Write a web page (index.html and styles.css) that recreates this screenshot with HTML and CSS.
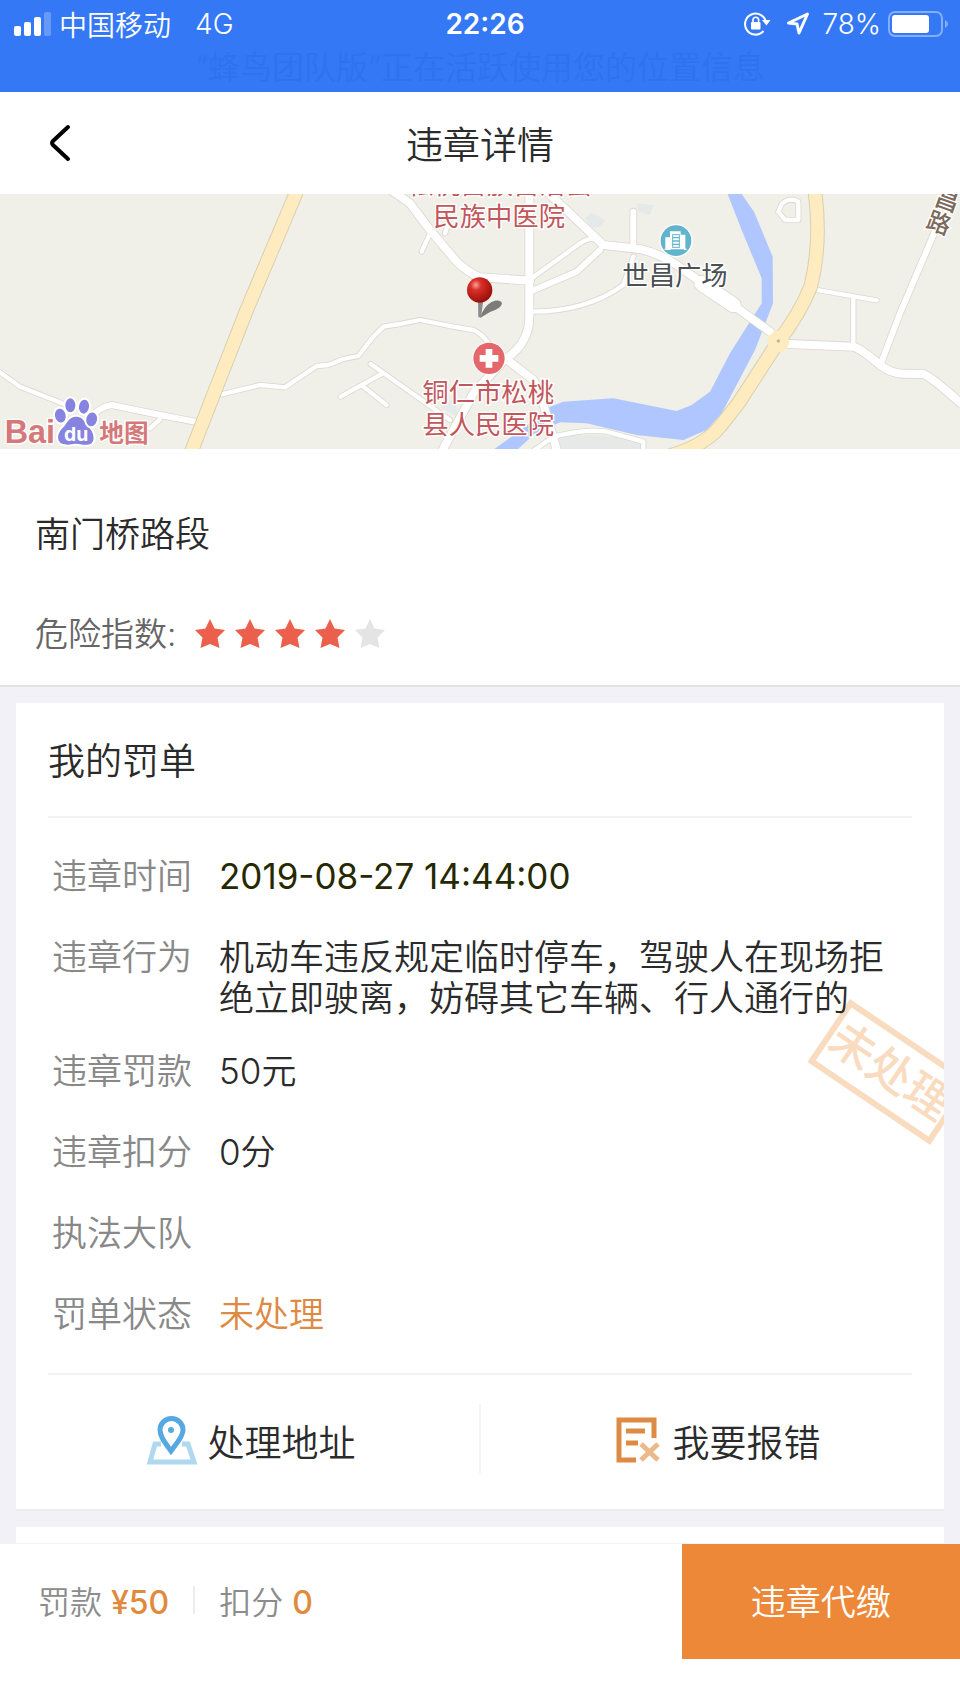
FILE: index.html
```html
<!DOCTYPE html>
<html lang="zh-CN">
<head>
    <meta charset="UTF-8">
    <meta name="viewport" content="width=device-width, initial-scale=1.0">
    <title>违章详情</title>
    <link rel="stylesheet" href="styles.css">
</head>
<body>

    <div class="status-bar">
        <div class="status-row">
            <div class="status-left">
                <svg class="signal" viewBox="0 0 38 24" fill="#fff">
                    <rect x="0" y="14" width="7" height="10" rx="2"/>
                    <rect x="10" y="10" width="7" height="14" rx="2"/>
                    <rect x="20" y="5" width="7" height="19" rx="2"/>
                    <rect x="30" y="0" width="7" height="24" rx="2" opacity=".25"/>
                </svg>
                <span class="carrier">中国移动</span>
                <span>4G</span>
            </div>
            <div class="clock">22:26</div>
            <div class="status-right">
                <svg class="lock" viewBox="0 0 28 26" fill="none" stroke="#fff" stroke-width="2">
                    <path d="M22 12 A10.500 10.500 0 1 0 19.500 20"/>
                    <path d="M18 9 L26.500 9 L22.500 14.500 Z" fill="#fff" stroke="none"/>
                    <rect x="7" y="11" width="9.500" height="7.500" rx="1" fill="#fff" stroke="none"/>
                    <path d="M9 11 V9 a2.800 2.800 0 0 1 5.600 0 V11" stroke-width="1.600"/>
                </svg>
                <svg class="arrow" viewBox="0 0 24 24" fill="none" stroke="#fff" stroke-width="3" stroke-linejoin="round">
                    <path d="M21.500 2 L2.500 11 L11 12 L13 21 Z"/>
                </svg>
                <span class="percent">78%</span>
                <svg class="battery" viewBox="0 0 60 26">
                    <rect x="1" y="1" width="53" height="24" rx="6" fill="none" stroke="#fff" stroke-width="2" opacity=".4"/>
                    <rect x="4" y="4" width="37" height="18" rx="3" fill="#fff"/>
                    <path d="M57 9 q3 1.500 3 4 q0 2.500 -3 4 Z" fill="#fff" opacity=".4"/>
                </svg>
            </div>
        </div>
        <div class="location-tip">“蜂鸟团队版”正在活跃使用您的位置信息</div>
    </div>

    <header class="nav">
        <a class="back" href="#" aria-label="返回">
            <svg viewBox="0 0 22 40" fill="none" stroke="#000" stroke-width="4" stroke-linecap="round" stroke-linejoin="round">
                <path d="M19 4 L4 18 Q2 20 4 22 L19 36"/>
            </svg>
        </a>
        <h1>违章详情</h1>
    </header>

    <svg class="map" viewBox="0 12 2880 765" preserveAspectRatio="xMidYMid slice">
        <defs>
            <radialGradient id="pin" cx=".35" cy=".3" r=".7">
                <stop offset="0" stop-color="#f5a49c"/>
                <stop offset=".3" stop-color="#d93027"/>
                <stop offset="1" stop-color="#9c0f0c"/>
            </radialGradient>
            <!-- white roads, drawn twice: casing first, then fill -->
            <g id="roads" fill="none" stroke-linejoin="round" stroke-linecap="round">
                <path class="w3" d="M1180 5 L1230 40 L1290 120 L1370 215 Q1400 245 1440 262 L1590 272"/>
                <path class="w1" d="M1290 130 L1265 185 M1335 130 L1345 100"/>
                <path class="w1" d="M665 613 L780 585 L855 592 L950 528 L985 525 L1030 507 L1075 498 L1120 440 L1150 410 L1200 402 L1260 390 L1360 410 L1420 420 Q1445 430 1470 465"/>
                <path class="w3" d="M1588 5 V380 Q1588 460 1515 508 L1420 610 L1325 785"/>
                <path class="w3" d="M1525 512 L1600 570 Q1620 600 1635 660 L1672 785"/>
                <path class="w3" d="M1640 5 L1720 80 L1810 165 L1900 175 Q1960 180 2030 225 L2150 310 L2310 425"/>
                <path class="w5" d="M2105 280 L2200 345"/>
                <path class="w1" d="M1595 265 L1740 160 Q1770 140 1790 150"/>
                <path class="w2" d="M1595 303 L1730 245 L1800 180"/>
                <path class="w1" d="M1595 365 Q1760 365 1870 285 L1900 200"/>
                <path class="w2" d="M1900 65 V170"/>
                <path class="w1" d="M2345 42 Q2370 20 2395 35 L2395 90 L2355 90 L2335 65 Z"/>
                <path class="w1" d="M2445 299 L2630 331 M2560 322 V465"/>
                <path class="w3" d="M2350 461 L2560 470 Q2585 478 2640 525 Q2680 555 2720 551 L2770 552 Q2800 565 2880 638"/>
                <path class="w2" d="M2645 515 L2700 370 L2815 100"/>
                <path class="w1" d="M-10 540 L60 590 L200 645 M480 688 L450 715"/>
                <path class="w2" d="M270 685 Q300 650 335 645 L480 675 L585 695"/>
                <path class="w1" d="M1112 522 L1350 690 M1022 620 L1145 552 M1090 590 L1160 645"/>
                <path class="w1" d="M1590 790 L1660 740 Q1760 715 1820 725 L1930 755 V790"/>
            </g>
        </defs>

        <rect y="0" width="2880" height="790" fill="#f0efe8"/>
        <path d="M1680 790 L1660 745 Q1770 720 1925 757 V790 Z" fill="#e6e9e7"/>
        <path d="M1755 85 L1775 68 L1815 90 L1800 110 L1775 115 Z M1910 40 L1960 45 L1950 75 L1915 65 Z M1320 650 L1370 620 V680 Z" fill="#e4e9ea"/>
        <path d="M2180 5 L2225 12 L2262 65 L2318 200 L2319 340 L2265 480 L2165 670 L2120 720 L2050 750 L1910 735 L1760 700 L1680 697 L1600 735 L1540 790 L1465 790 L1590 700 L1640 655 L1690 635 L1840 625 L2030 663 L2075 645 L2130 605 L2190 490 L2285 340 L2285 265 L2225 120 Z" fill="#afc6ff"/>

        <use href="#roads" class="casing"/>
        <use href="#roads" class="fill"/>

        <g fill="none" stroke-linejoin="round">
            <path d="M890 5 L740 360 L650 590 L572 790 M2445 5 Q2465 160 2432 290 Q2400 370 2335 455 L2215 640 L2160 710 Q2110 770 2000 800" stroke="#d9d0b0" stroke-width="44"/>
            <circle cx="2335" cy="455" r="32" fill="#feebbf"/>
            <path d="M890 5 L740 360 L650 590 L572 790 M2445 5 Q2465 160 2432 290 Q2400 370 2335 455 L2215 640 L2160 710 Q2110 770 2000 800" stroke="#feebbf" stroke-width="38"/>
        </g>
        <circle cx="2335" cy="453" r="5" fill="#c9b37d"/>

        <g class="label hospital">
            <text x="1223" y="11">松桃苗族自治县</text>
            <text x="1300" y="108">民族中医院</text>
            <text x="1267" y="636">铜仁市松桃</text>
            <text x="1267" y="733">县人民医院</text>
        </g>
        <text class="label place" x="1867" y="284">世昌广场</text>
        <text class="label street" x="2774" y="111" transform="rotate(20 2774 111)">路</text>
        <text class="label street" x="2800" y="43" transform="rotate(20 2800 43)">昌</text>

        <g>
            <circle cx="2028" cy="152" r="50" fill="#fff"/>
            <circle cx="2028" cy="152" r="46" fill="#62b4cd"/>
            <path d="M1998 178 V144 H2012 V126 H2040 V136 H2054 V178 H2060 M1994 178 H2012" fill="#fff" stroke="#fff" stroke-width="4"/>
            <rect x="2018" y="134" width="20" height="38" fill="#fff" stroke="#62b4cd" stroke-width="3"/>
            <path d="M2018 143 H2038 M2018 153 H2038 M2018 163 H2038" stroke="#62b4cd" stroke-width="4"/>
        </g>
        <g>
            <circle cx="1467" cy="505" r="50" fill="#fff"/>
            <circle cx="1467" cy="505" r="47" fill="#e4686b"/>
            <path d="M1467 477 V533 M1439 505 H1495" stroke="#fff" stroke-width="20"/>
        </g>
        <g>
            <path d="M1440 384 Q1450 350 1475 336 Q1500 326 1506 340 Q1504 356 1470 366 Z" fill="#555" opacity=".75"/>
            <path d="M1434 330 L1435 382 H1443 L1450 330 Z" fill="#8b8b8b"/>
            <circle cx="1439" cy="300" r="38" fill="url(#pin)"/>
        </g>

        <g class="logo">
            <text class="logo-bai" x="14" y="759">Bai</text>
            <g fill="#8783e0" stroke="#fff" stroke-width="12" paint-order="stroke">
                <path d="M228 680 C250 680 256 700 268 714 C284 730 288 764 262 764 C246 766 240 761 228 761 C216 761 208 766 194 763 C168 760 170 730 188 714 C200 702 206 680 228 680 Z"/>
                <ellipse cx="181" cy="677" rx="16" ry="21" transform="rotate(-12 181 677)"/>
                <ellipse cx="211" cy="646" rx="15" ry="21"/>
                <ellipse cx="252" cy="650" rx="15" ry="21" transform="rotate(8 252 650)"/>
                <ellipse cx="275" cy="688" rx="16" ry="21" transform="rotate(12 275 688)"/>
            </g>
            <text class="logo-du" x="192" y="752">du</text>
            <text class="logo-map" x="298" y="755">地图</text>
        </g>
    </svg>

    <section class="place-info">
        <h2>南门桥路段</h2>
        <div class="danger">
            <span>危险指数:</span>
            <div class="stars" role="img" aria-label="4/5">
                <svg class="star on" viewBox="0 0 32 32"><path d="M16 1 L20.500 10.500 L31 12 L23.500 19.500 L25.500 30 L16 26 L6.500 30 L8.500 19.500 L1 12 L11.500 10.500 Z"/></svg>
                <svg class="star on" viewBox="0 0 32 32"><path d="M16 1 L20.500 10.500 L31 12 L23.500 19.500 L25.500 30 L16 26 L6.500 30 L8.500 19.500 L1 12 L11.500 10.500 Z"/></svg>
                <svg class="star on" viewBox="0 0 32 32"><path d="M16 1 L20.500 10.500 L31 12 L23.500 19.500 L25.500 30 L16 26 L6.500 30 L8.500 19.500 L1 12 L11.500 10.500 Z"/></svg>
                <svg class="star on" viewBox="0 0 32 32"><path d="M16 1 L20.500 10.500 L31 12 L23.500 19.500 L25.500 30 L16 26 L6.500 30 L8.500 19.500 L1 12 L11.500 10.500 Z"/></svg>
                <svg class="star" viewBox="0 0 32 32"><path d="M16 1 L20.500 10.500 L31 12 L23.500 19.500 L25.500 30 L16 26 L6.500 30 L8.500 19.500 L1 12 L11.500 10.500 Z"/></svg>
            </div>
        </div>
    </section>

    <main class="content">
        <section class="card">
            <h2 class="card-title">我的罚单</h2>
            <div class="stamp">未处理</div>
            <dl class="ticket">
                <div class="row"><dt>违章时间</dt><dd class="time">2019-08-27 14:44:00</dd></div>
                <div class="row"><dt>违章行为</dt><dd>机动车违反规定临时停车，驾驶人在现场拒绝立即驶离，妨碍其它车辆、行人通行的</dd></div>
                <div class="row"><dt>违章罚款</dt><dd>50元</dd></div>
                <div class="row"><dt>违章扣分</dt><dd>0分</dd></div>
                <div class="row"><dt>执法大队</dt><dd></dd></div>
                <div class="row"><dt>罚单状态</dt><dd class="pending">未处理</dd></div>
            </dl>
            <div class="actions">
                <button type="button" class="action">
                    <svg viewBox="0 0 60 60" fill="none">
                        <path d="M21 35 H15 L10 53 H54 L48 35 H42" stroke="#b0d9f0" stroke-width="5"/>
                        <path d="M31 42 C26 35 20 28 20 21 A11.500 11.500 0 0 1 43 21 C43 28 36 35 31 42 Z" stroke="#55a8e2" stroke-width="5"/>
                        <circle cx="31" cy="21" r="3" fill="#55a8e2"/>
                    </svg>
                    <span>处理地址</span>
                </button>
                <button type="button" class="action">
                    <svg viewBox="0 0 60 60" fill="none" stroke="#dd8a45" stroke-width="5">
                        <path d="M31 51 H14 V11 H49 V29"/>
                        <path d="M21 22 H40 M21 34 H33"/>
                        <path d="M36 35 L53 51 M53 35 L36 51" stroke="#ebb88a"/>
                    </svg>
                    <span>我要报错</span>
                </button>
            </div>
        </section>
        <section class="card next"></section>
    </main>

    <footer class="pay-bar">
        <div class="summary">
            <span>罚款 <b>¥50</b></span>
            <span class="sep"></span>
            <span>扣分 <b>0</b></span>
        </div>
        <button type="button" class="pay">违章代缴</button>
    </footer>

</body>
</html>
```
FILE: styles.css
```css
* { box-sizing: border-box; }
body {
    margin: 0;
    min-height: 100vh;
    display: flex;
    flex-direction: column;
    background-color: #fff;
    color: #2b2b2b;
    font-family: Inter, "Noto Sans CJK SC", sans-serif;
    font-weight: 350;
}
h1, h2, dl, dd { margin: 0; font-weight: inherit; }
button { font: inherit; color: inherit; border: none; cursor: pointer; }
svg { display: block; }

/* status bar */
.status-bar { background-color: #3478f6; color: #fff; height: 92px; font-size: 28px; }
.status-row {
    display: grid;
    grid-template-columns: 1fr auto 1fr;
    align-items: center;
    height: 48px;
    padding: 0 12px 0 14px;
}
.status-left { display: flex; align-items: center; }
.signal { width: 38px; height: 24px; margin-right: 7px; }
.carrier { margin-right: 24px; }
.clock { font-weight: 600; padding-left: 8px; }
.status-right { display: flex; align-items: center; justify-content: flex-end; }
.lock { width: 28px; height: 26px; margin-right: 14px; }
.arrow { width: 24px; height: 24px; margin-right: 12px; }
.percent { margin-right: 7px; }
.battery { width: 60px; height: 26px; }
.location-tip { text-align: center; font-size: 32px; line-height: 40px; color: #3072ee; }

/* title */
.nav { display: grid; grid-template-columns: 80px 1fr 80px; align-items: center; height: 102px; }
.nav h1 { text-align: center; font-size: 37px; }
.back { justify-self: end; padding: 0 9px; }
.back svg { width: 22px; height: 40px; }

/* map */
.map { width: 100%; height: auto; }
.casing { stroke: #dad9d2; --edge: 5px; }
.fill { stroke: #fff; --edge: 0px; }
.w1 { stroke-width: calc(13px + var(--edge)); }
.w2 { stroke-width: calc(18px + var(--edge)); }
.w3 { stroke-width: calc(24px + var(--edge)); }
.w5 { stroke-width: calc(44px + var(--edge)); }
.label { font-size: 79px; font-weight: 400; stroke: #fff; stroke-width: 8px; paint-order: stroke; }
.hospital { fill: #c2565b; }
.place { fill: #4a5052; }
.street { fill: #7b6a5c; font-size: 72px; font-weight: 500; }
.logo { font-weight: 700; fill: #d4787a; stroke: #fff; stroke-width: 8px; paint-order: stroke; }
.logo-bai { font-family: "Liberation Sans", sans-serif; font-size: 97px; }
.logo-du { font-size: 58px; fill: #fff; stroke: none; }
.logo-map { font-size: 74px; }

/* place */
.place-info { padding: 60px 35px 26px; border-bottom: 2px solid #e2e2e4; line-height: 50px; }
.place-info h2 { font-size: 35px; margin-bottom: 50px; }
.danger { display: flex; align-items: center; font-size: 33px; color: #666; }
.stars { display: flex; gap: 8px; margin-left: 18px; }
.star { width: 32px; height: 32px; fill: #e4e4e4; }
.star.on { fill: #ec5f4c; }

/* ticket card */
.content { flex: 1; background-color: #f1f1f7; padding: 16px 16px 0; display: flex; flex-direction: column; gap: 16px; }
.card { position: relative; overflow: hidden; background-color: #fff; border-bottom: 2px solid #ececf0; }
.card-title { margin: 0 32px; padding-top: 4px; line-height: 109px; font-size: 37px; border-bottom: 2px solid #f3f3f4; }
.card.next { flex: 1; border-bottom: none; }
.ticket { position: relative; margin: 0 32px; padding: 18px 0; border-bottom: 2px solid #f3f3f4; font-size: 35px; line-height: 41px; }
.row { display: flex; min-height: 81px; padding: 20px 16px 12px 4px; }
.row dt { flex: none; width: 167px; color: #888; }
.row .time { color: #262800; font-weight: 400; }
.row .pending { color: #dd8a45; }
.stamp {
    position: absolute;
    top: 331px;
    right: -20px;
    width: 148px;
    height: 76px;
    border: 6px solid #f9dcc0;
    color: #f9dcc0;
    font-size: 45px;
    font-weight: 500;
    line-height: 62px;
    text-align: center;
    white-space: nowrap;
    transform: rotate(34deg);
}
.actions { display: flex; padding: 29px 0 35px; }
.action { flex: 1; display: flex; align-items: center; justify-content: center; gap: 8px; height: 70px; padding: 0; background: none; font-size: 37px; }
.action span { padding-top: 4px; }
.action + .action { border-left: 2px solid #f3f3f4; }
.action svg { width: 60px; height: 60px; }

/* bottom bar */
.pay-bar { display: flex; justify-content: space-between; height: 163px; border-top: 1px solid #f3f3f4; }
.summary { display: flex; align-items: center; gap: 24px; height: 112px; padding-left: 38px; font-size: 32px; color: #8c8c8c; }
.summary b { font-weight: 500; color: #e08a3e; }
.sep { width: 2px; height: 28px; background-color: #ececec; }
.pay { width: 29%; height: 115px; padding: 0 0 4px; background-color: #ed8839; color: #fff; font-size: 35px; }
```
